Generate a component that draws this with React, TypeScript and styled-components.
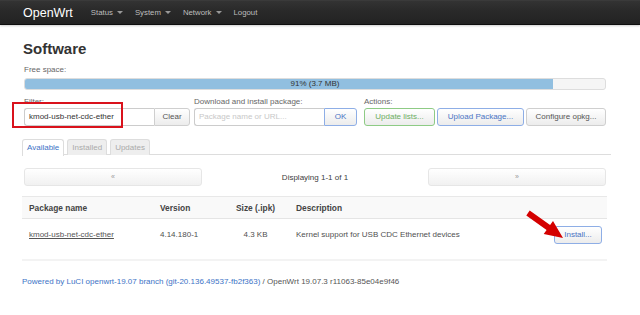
import React from "react";
import styled, { createGlobalStyle } from "styled-components";

const Global = createGlobalStyle`
  html, body { margin: 0; padding: 0; background: #fff; }
  body { font-family: "Liberation Sans", Arial, sans-serif; font-size: 8px; color: #404040; width: 640px; height: 315px; overflow: hidden; }
  * { box-sizing: border-box; }
`;

const Navbar = styled.div`
  height: 25px;
  background: linear-gradient(#333 0%, #2a2a2a 40%, #222 100%);
  border-top: 1px solid #3a3a3a;
  border-bottom: 1px solid #0e0e0e;
  box-shadow: 0 1px 2px rgba(0, 0, 0, 0.2);
  display: flex;
  align-items: center;
  padding-left: 23px;
`;

const Brand = styled.div`
  color: #fff;
  font-size: 12.5px;
  margin-right: 18px;
`;

const NavList = styled.div`
  display: flex;
  gap: 12px;
  align-items: center;
`;

const NavItem = styled.div<{ $drop?: boolean }>`
  color: #bdbdbd;
  font-size: 7.8px;
  display: flex;
  align-items: center;
  &::after {
    content: "";
    display: ${(p) => (p.$drop ? "block" : "none")};
    margin-left: 4px;
    border-left: 3px solid transparent;
    border-right: 3px solid transparent;
    border-top: 3px solid #999;
  }
`;

const Main = styled.div`
  position: relative;
  margin: 0 29px 0 22px;
  padding-top: 15px;
`;

const Heading = styled.h2`
  margin: 0 0 0 1px;
  font-size: 15px;
  line-height: 18px;
  font-weight: bold;
  color: #333;
`;

const Section = styled.div`
  padding: 0 5px 0 2px;
`;

const Label = styled.div<{ $top: number }>`
  margin-top: ${(p) => p.$top}px;
  line-height: 10px;
  color: #666;
  font-size: 8px;
`;

const Bar = styled.div`
  position: relative;
  margin-top: 3px;
  height: 12px;
  border: 1px solid #ddd;
  border-radius: 3px;
  background: #f5f5f5;
  overflow: hidden;
`;

const Fill = styled.div`
  height: 100%;
  background: #91bfe0;
`;

const BarText = styled.div`
  position: absolute;
  inset: 0;
  text-align: center;
  line-height: 10px;
  color: #333;
  font-size: 8px;
`;

const FormRow = styled.div`
  display: flex;
  align-items: flex-start;
`;

const Group = styled.div<{ $ml?: number }>`
  margin-left: ${(p) => p.$ml || 0}px;
  display: flex;
  flex-direction: column;
`;

const Controls = styled.div<{ $gap?: number }>`
  display: flex;
  gap: ${(p) => p.$gap || 0}px;
  margin-top: 1px;
`;

const Input = styled.div<{ $ph?: boolean }>`
  width: 130px;
  height: 18px;
  border: 1px solid #ccc;
  border-right: none;
  border-radius: 3px 0 0 3px;
  background: #fff;
  padding-left: 4px;
  line-height: 16px;
  font-size: 8px;
  color: ${(p) => (p.$ph ? "#c8c8c8" : "#333")};
`;

const Button = styled.div<{ $tone?: "green" | "blue" | "plain"; $w: number; $attached?: boolean }>`
  width: ${(p) => p.$w}px;
  height: 18px;
  border: 1px solid
    ${(p) => (p.$tone === "green" ? "#8ecb85" : p.$tone === "blue" ? "#8eaee6" : "#cfcfcf")};
  border-radius: ${(p) => (p.$attached ? "0 3px 3px 0" : "3px")};
  background: linear-gradient(#ffffff, #ececec);
  color: ${(p) => (p.$tone === "green" ? "#6cae62" : p.$tone === "blue" ? "#4a74c4" : "#555")};
  text-align: center;
  line-height: 16px;
  font-size: 8px;
  flex: none;
`;

const Tabs = styled.div`
  margin-top: 13px;
  display: flex;
  gap: 3px;
  border-bottom: 1px solid #ddd;
  height: 16px;
`;

const Tab = styled.div<{ $active?: boolean }>`
  height: 16px;
  padding: 0 4px;
  border: 1px solid #ddd;
  border-bottom: none;
  border-radius: 3px 3px 0 0;
  background: ${(p) => (p.$active ? "#fff" : "#eee")};
  color: ${(p) => (p.$active ? "#3d73c6" : "#aaa")};
  line-height: 15px;
  font-size: 8px;
  ${(p) => (p.$active ? "height: 17px;" : "")}
`;

const Pager = styled.div`
  margin-top: 13px;
  display: grid;
  grid-template-columns: 178px 1fr 178px;
  align-items: center;
`;

const PagerButton = styled.div`
  height: 18px;
  border: 1px solid #e6e6e6;
  border-radius: 3px;
  background: linear-gradient(#fff, #f1f1f1);
  color: #999;
  text-align: center;
  line-height: 16px;
  font-size: 7px;
`;

const PagerText = styled.div`
  text-align: center;
  color: #404040;
  font-size: 8px;
`;

const Table = styled.div`
  margin-top: 10px;
  margin-right: 4px;
  border-top: 1px solid #e8e8e8;
  border-bottom: 2px solid #f3f3f3;
  padding-bottom: 9px;
`;

const Row = styled.div<{ $head?: boolean }>`
  display: grid;
  grid-template-columns: 131px 76px 60px 1fr auto;
  align-items: center;
  height: ${(p) => (p.$head ? 22 : 31)}px;
  background: ${(p) => (p.$head ? "#f9f9f9" : "#fff")};
  border-bottom: ${(p) => (p.$head ? "1px solid #e5e5e5" : "none")};
  font-weight: ${(p) => (p.$head ? "bold" : "normal")};
  color: ${(p) => (p.$head ? "#444" : "#505050")};
  font-size: ${(p) => (p.$head ? 8.4 : 8)}px;
`;

const Cell = styled.div<{ $center?: boolean; $right?: boolean }>`
  padding: ${(p) => (p.$center ? "0 14px 0 7px" : p.$right ? "0 5px 0 0" : "0 0 0 7px")};
  text-align: ${(p) => (p.$center ? "center" : "left")};
  white-space: nowrap;
`;

const PkgLink = styled.span`
  color: #555;
  text-decoration: underline;
`;

const Footer = styled.div`
  margin-top: 16px;
  font-size: 8px;
  color: #555;
`;

const FootLink = styled.span`
  color: #3d73c6;
`;

const Highlight = styled.div`
  position: absolute;
  left: -10px;
  top: 77px;
  width: 111px;
  height: 26px;
  border: 2px solid #d9121c;
  pointer-events: none;
`;

const ArrowSvg = styled.svg`
  position: absolute;
  left: 498px;
  top: 180px;
`;

export default function App() {
  return (
    <>
      <Global />
      <Navbar>
        <Brand>OpenWrt</Brand>
        <NavList>
          <NavItem $drop>Status</NavItem>
          <NavItem $drop>System</NavItem>
          <NavItem $drop>Network</NavItem>
          <NavItem>Logout</NavItem>
        </NavList>
      </Navbar>
      <Main>
        <Heading>Software</Heading>
        <Section>
          <Label $top={7}>Free space:</Label>
          <Bar>
            <Fill style={{ width: "91%" }} />
            <BarText>91% (3.7 MB)</BarText>
          </Bar>
          <FormRow>
            <Group>
              <Label $top={7}>Filter:</Label>
              <Controls>
                <Input>kmod-usb-net-cdc-ether</Input>
                <Button $w={36} $attached>Clear</Button>
              </Controls>
            </Group>
            <Group $ml={4}>
              <Label $top={7}>Download and install package:</Label>
              <Controls>
                <Input $ph>Package name or URL...</Input>
                <Button $w={33} $attached $tone="blue">OK</Button>
              </Controls>
            </Group>
            <Group $ml={7}>
              <Label $top={7}>Actions:</Label>
              <Controls $gap={2}>
                <Button $w={71} $tone="green">Update lists...</Button>
                <Button $w={87} $tone="blue">Upload Package...</Button>
                <Button $w={80}>Configure opkg...</Button>
              </Controls>
            </Group>
          </FormRow>
        </Section>
        <Tabs>
          <Tab $active>Available</Tab>
          <Tab>Installed</Tab>
          <Tab>Updates</Tab>
        </Tabs>
        <Section>
          <Pager>
            <PagerButton>«</PagerButton>
            <PagerText>Displaying 1-1 of 1</PagerText>
            <PagerButton>»</PagerButton>
          </Pager>
        </Section>
        <Table>
          <Row $head>
            <Cell>Package name</Cell>
            <Cell>Version</Cell>
            <Cell>Size (.ipk)</Cell>
            <Cell>Description</Cell>
            <Cell $right />
          </Row>
          <Row>
            <Cell><PkgLink>kmod-usb-net-cdc-ether</PkgLink></Cell>
            <Cell>4.14.180-1</Cell>
            <Cell $center>4.3 KB</Cell>
            <Cell>Kernel support for USB CDC Ethernet devices</Cell>
            <Cell $right>
              <Button $w={48} $tone="blue">Install...</Button>
            </Cell>
          </Row>
        </Table>
        <Footer>
          <FootLink>Powered by LuCI openwrt-19.07 branch (git-20.136.49537-fb2f363)</FootLink> / OpenWrt 19.07.3 r11063-85e04e9f46
        </Footer>
        <Highlight />
        <ArrowSvg width="50" height="40" viewBox="0 0 50 40">
          <polygon
            points="9.7,5.6 30.1,20.1 33,16 43,33 23.7,29 26.6,25 6.3,10.4"
            fill="#d40000"
          />
        </ArrowSvg>
      </Main>
    </>
  );
}
